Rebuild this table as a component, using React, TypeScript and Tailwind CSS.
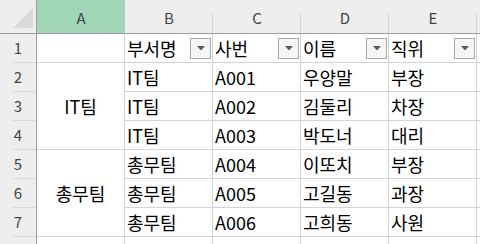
import React from "react";

const COLS = ["A", "B", "C", "D", "E"];
const HEAD = ["부서명", "사번", "이름", "직위"];
const ROWS = [
  ["IT팀", "A001", "우양말", "부장"],
  ["IT팀", "A002", "김둘리", "차장"],
  ["IT팀", "A003", "박도너", "대리"],
  ["총무팀", "A004", "이또치", "부장"],
  ["총무팀", "A005", "고길동", "과장"],
  ["총무팀", "A006", "고희동", "사원"],
];

const font = "font-['Malgun_Gothic','Noto_Sans_CJK_KR',sans-serif]";
const cell = "border-r border-b border-[#d4d4d4] bg-white";
const rowHead =
  "flex items-center justify-center border-r border-r-[#9e9e9e] bg-[#eeeeee] text-[15px] text-[#444] bg-[linear-gradient(#d8d8d8,#d8d8d8)] bg-no-repeat bg-[length:23px_1px] bg-right-bottom";

function FilterButton() {
  return (
    <span className="mr-px flex h-[21px] w-[21px] items-center justify-center border border-[#a9a9a9] bg-[#f4f5f7]">
      <svg width="8" height="5" viewBox="0 0 8 5">
        <polygon points="0,0 8,0 4,4.5" fill="#5a5a5a" />
      </svg>
    </span>
  );
}

export default function App() {
  return (
    <div
      className={`grid h-[244px] w-[480px] overflow-hidden bg-white ${font} grid-cols-[37px_repeat(5,88px)_1fr] grid-rows-[34px_repeat(7,29px)_1fr]`}
    >
      {/* column header row */}
      <div className="flex items-end justify-end border-r border-b border-[#9e9e9e] bg-[#eeeeee]">
        <svg width="22" height="22" viewBox="0 0 22 22" className="mb-[3px] mr-[2px]">
          <polygon points="21,0 21,20 1,20" fill="#dadada" />
        </svg>
      </div>
      {COLS.map((c, i) => (
        <div
          key={c}
          className={`flex items-center justify-center pt-[3px] text-[15px] text-[#444] border-b border-[#9e9e9e] ${
            i === 0
              ? "bg-[#a0d6b6]"
              : "bg-[#eeeeee] bg-[linear-gradient(#d2d2d2,#d2d2d2)] bg-no-repeat bg-[length:1px_19px] bg-right-bottom"
          }`}
        >
          {c}
        </div>
      ))}
      <div className="border-b border-[#9e9e9e] bg-[#eeeeee]" />

      {/* row 1: table header */}
      <div className={rowHead}>1</div>
      <div className={cell} />
      {HEAD.map((h) => (
        <div key={h} className={`${cell} flex items-center justify-between pl-[2px] text-[18px] text-black`}>
          <span>{h}</span>
          <FilterButton />
        </div>
      ))}
      <div className="border-b border-[#d4d4d4]" />

      {/* data rows */}
      {ROWS.map((r, i) => (
        <React.Fragment key={i}>
          <div className={rowHead}>{i + 2}</div>
          {i % 3 === 0 && (
            <div className={`${cell} row-span-3 flex items-center justify-center text-[18px] text-black`}>
              {r[0]}
            </div>
          )}
          {r.map((v, j) => (
            <div key={j} className={`${cell} flex items-center pl-[2px] text-[18px] text-black`}>
              {v}
            </div>
          ))}
          <div className="border-b border-[#d4d4d4]" />
        </React.Fragment>
      ))}

      {/* partial row 8 */}
      <div className="border-r border-[#9e9e9e] bg-[#eeeeee]" />
      {COLS.map((c) => (
        <div key={c} className="border-r border-[#d4d4d4]" />
      ))}
      <div />
    </div>
  );
}
